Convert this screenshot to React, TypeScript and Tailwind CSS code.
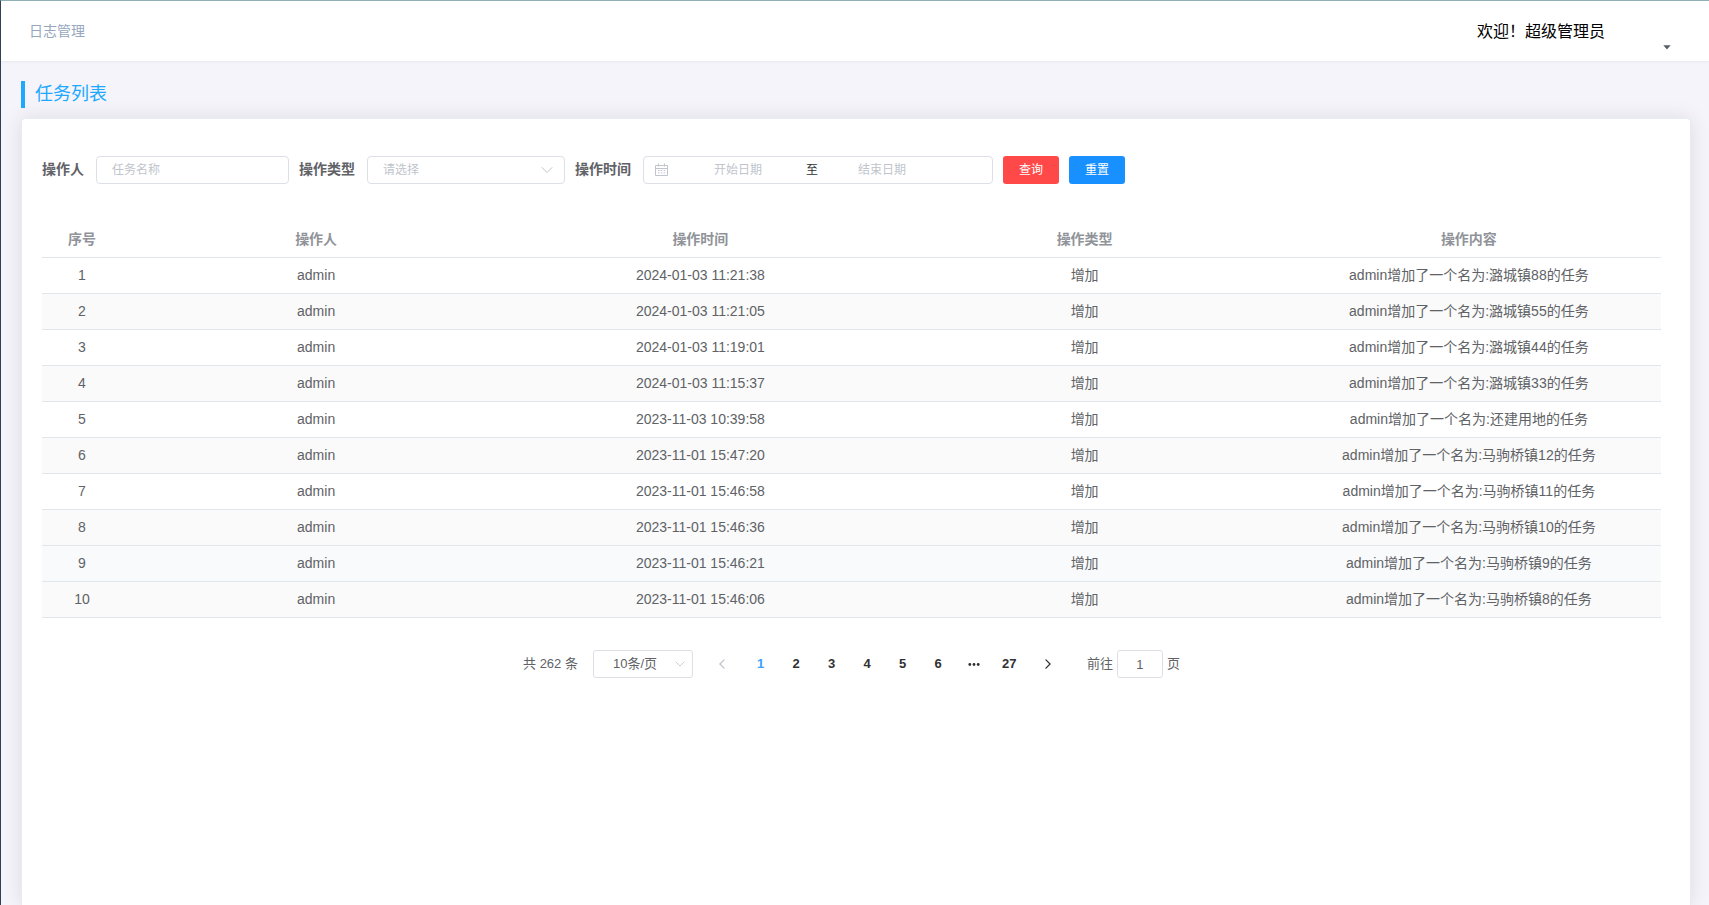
import { useState } from "react";

const rows = [
  { time: "2024-01-03 11:21:38", content: "admin增加了一个名为:潞城镇88的任务" },
  { time: "2024-01-03 11:21:05", content: "admin增加了一个名为:潞城镇55的任务" },
  { time: "2024-01-03 11:19:01", content: "admin增加了一个名为:潞城镇44的任务" },
  { time: "2024-01-03 11:15:37", content: "admin增加了一个名为:潞城镇33的任务" },
  { time: "2023-11-03 10:39:58", content: "admin增加了一个名为:还建用地的任务" },
  { time: "2023-11-01 15:47:20", content: "admin增加了一个名为:马驹桥镇12的任务" },
  { time: "2023-11-01 15:46:58", content: "admin增加了一个名为:马驹桥镇11的任务" },
  { time: "2023-11-01 15:46:36", content: "admin增加了一个名为:马驹桥镇10的任务" },
  { time: "2023-11-01 15:46:21", content: "admin增加了一个名为:马驹桥镇9的任务" },
  { time: "2023-11-01 15:46:06", content: "admin增加了一个名为:马驹桥镇8的任务" },
];

const pages = ["1", "2", "3", "4", "5", "6", "...", "27"];

const Arrow = ({ className }: { className: string }) => (
  <svg
    className={className}
    viewBox="0 0 12 12"
    fill="none"
    stroke="currentColor"
    strokeLinecap="round"
    strokeLinejoin="round"
  >
    <path d="M1 3.5l5 5 5-5" />
  </svg>
);

const CalendarIcon = () => (
  <svg
    className="h-[14px] w-[14px] shrink-0 text-[#c0c4cc]"
    viewBox="0 0 14 14"
    fill="none"
    stroke="currentColor"
  >
    <path d="M1.5 2.5h12v10h-12zM1.5 5.5h12M4.5 .5v3M10.5 .5v3" />
    <path d="M4 7.5h1.5M6.8 7.5h1.5M9.6 7.5h1.5M4 9.9h1.5M6.8 9.9h1.5M9.6 9.9h1.5" />
  </svg>
);

const Header = () => (
  <header className="relative z-10 flex h-[60px] shrink-0 items-center justify-between bg-white pl-7 pr-[37px] shadow-[0_1px_3px_rgba(0,21,41,0.06)]">
    <a href="#" className="text-sm text-[#97a8be]">
      日志管理
    </a>
    <div className="flex h-full items-center gap-[57px]">
      <span className="pt-px text-base text-black">欢迎！超级管理员</span>
      <button type="button" aria-label="用户菜单" className="self-end pb-[11px]">
        <svg className="h-[10px] w-[10px] fill-[#5a5e66]" viewBox="0 0 10 10">
          <path d="M1.3 5.2h7.4L5.4 9a.6.6 0 0 1-.8 0z" />
        </svg>
      </button>
    </div>
  </header>
);

const SearchForm = () => (
  <form
    className="flex flex-wrap items-center gap-[10px]"
    onSubmit={(e) => e.preventDefault()}
  >
    <div className="flex items-center gap-3">
      <label htmlFor="operator" className="pb-0.5 text-sm font-bold text-[#606266]">
        操作人
      </label>
      <input
        id="operator"
        placeholder="任务名称"
        className="h-7 w-[193px] rounded border border-[#dcdfe6] px-[15px] text-xs text-[#606266] outline-none placeholder:text-[#c0c4cc]"
      />
    </div>
    <div className="flex items-center gap-3">
      <label htmlFor="type" className="pb-0.5 text-sm font-bold text-[#606266]">
        操作类型
      </label>
      <div className="relative">
        <select
          id="type"
          defaultValue=""
          className="h-7 w-[198px] appearance-none rounded border border-[#dcdfe6] bg-white px-[15px] text-xs text-[#c0c4cc] outline-none"
        >
          <option value="">请选择</option>
          <option value="add">增加</option>
        </select>
        <Arrow className="pointer-events-none absolute right-3 top-2 h-3 w-3 text-[#c0c4cc]" />
      </div>
    </div>
    <div className="flex items-center gap-3">
      <label htmlFor="start" className="pb-0.5 text-sm font-bold text-[#606266]">
        操作时间
      </label>
      <div className="flex h-7 w-[350px] items-center rounded border border-[#dcdfe6] px-[10px]">
        <CalendarIcon />
        <input
          id="start"
          placeholder="开始日期"
          className="ml-[6px] w-32 text-center text-xs outline-none placeholder:text-[#c0c4cc]"
        />
        <span className="w-4 whitespace-nowrap pl-1 text-xs text-[#303133]">至</span>
        <input
          aria-label="结束日期"
          placeholder="结束日期"
          className="w-32 text-center text-xs outline-none placeholder:text-[#c0c4cc]"
        />
      </div>
    </div>
    <button type="submit" className="h-7 w-14 rounded-[3px] bg-[#ff4949] text-xs text-white">
      查询
    </button>
    <button type="reset" className="h-7 w-14 rounded-[3px] bg-[#1890ff] text-xs text-white">
      重置
    </button>
  </form>
);

const LogTable = () => (
  <table className="w-full table-fixed border-separate border-spacing-0 text-center text-sm text-[#606266]">
    <thead>
      <tr className="h-9 text-[#909399]">
        <th className="w-[82px] border-b border-[#dfe6ec] pb-0.5 pr-0.5">序号</th>
        <th className="border-b border-[#dfe6ec] pb-0.5">操作人</th>
        <th className="border-b border-[#dfe6ec] pb-0.5">操作时间</th>
        <th className="border-b border-[#dfe6ec] pb-0.5">操作类型</th>
        <th className="border-b border-[#dfe6ec] pb-0.5">操作内容</th>
      </tr>
    </thead>
    <tbody>
      {rows.map((row, i) => (
        <tr
          key={row.time}
          className={`h-9 ${i === 8 ? "bg-[#f8fafc]" : i % 2 ? "bg-[#fafafa]" : "bg-white"}`}
        >
          <td className="border-b border-[#dfe6ec] pb-0.5 pr-0.5">{i + 1}</td>
          <td className="border-b border-[#dfe6ec] pb-0.5">admin</td>
          <td className="border-b border-[#dfe6ec] pb-0.5">{row.time}</td>
          <td className="border-b border-[#dfe6ec] pb-0.5">增加</td>
          <td className="border-b border-[#dfe6ec] pb-0.5">{row.content}</td>
        </tr>
      ))}
    </tbody>
  </table>
);

const Pagination = () => {
  const [current, setCurrent] = useState("1");

  return (
    <nav className="flex items-center justify-center text-[13px] text-[#606266]">
      <span>共 262 条</span>
      <div className="relative ml-[15px]">
        <select
          aria-label="每页条数"
          className="h-7 w-[100px] appearance-none rounded-[3px] border border-[#dcdfe6] bg-white pl-[19px] outline-none"
        >
          <option>10条/页</option>
          <option>20条/页</option>
        </select>
        <Arrow className="pointer-events-none absolute right-2 top-[9px] h-[10px] w-[10px] text-[#c0c4cc]" />
      </div>
      <button type="button" aria-label="上一页" className="ml-6 text-[#c0c4cc]">
        <Arrow className="h-[10px] w-[10px] rotate-90 stroke-[1.5]" />
      </button>
      <div className="ml-4 grid w-[284px] grid-cols-8 font-bold text-[#303133]">
        {pages.map((page) => (
          <button
            key={page}
            type="button"
            aria-label={page === "..." ? "更多" : page}
            onClick={() => setCurrent(page)}
            className={`flex h-7 items-center justify-center ${page === current ? "text-[#409eff]" : ""}`}
          >
            {page === "..." ? (
              <svg className="h-3 w-3 fill-current" viewBox="0 0 12 12">
                <circle cx="1.8" cy="6.5" r="1.4" />
                <circle cx="6" cy="6.5" r="1.4" />
                <circle cx="10.2" cy="6.5" r="1.4" />
              </svg>
            ) : (
              page
            )}
          </button>
        ))}
      </div>
      <button type="button" aria-label="下一页" className="ml-4 text-[#303133]">
        <Arrow className="h-[10px] w-[10px] -rotate-90 stroke-[1.5]" />
      </button>
      <label htmlFor="jump" className="ml-[34px]">
        前往
      </label>
      <input
        id="jump"
        defaultValue="1"
        className="mx-1 h-7 w-[46px] rounded-[3px] border border-[#dcdfe6] text-center outline-none"
      />
      <span>页</span>
    </nav>
  );
};

const App = () => {
  return (
    <div className="flex min-h-screen flex-col overflow-hidden border-l border-t border-l-[#304156] border-t-[#8fb1b5] bg-[#f4f4fa] font-['Liberation_Sans','Noto_Sans_CJK_SC',sans-serif]">
      <Header />
      <main className="flex flex-1 flex-col pl-5 pr-[18px] pt-5">
        <h1 className="mb-[10px] border-l-4 border-[#20a8ff] pl-[10px] text-lg leading-[27px] text-[#20a8ff]">
          任务列表
        </h1>
        <section className="flex-1 rounded-t border border-b-0 border-[#e6ebf5] bg-white pb-5 pl-5 pr-[29px] pt-[37px] shadow-[0_0_20px_rgba(0,0,0,0.1)]">
          <SearchForm />
          <div className="mt-[38px]">
            <LogTable />
          </div>
          <div className="mt-8">
            <Pagination />
          </div>
        </section>
      </main>
    </div>
  );
};

export default App;
